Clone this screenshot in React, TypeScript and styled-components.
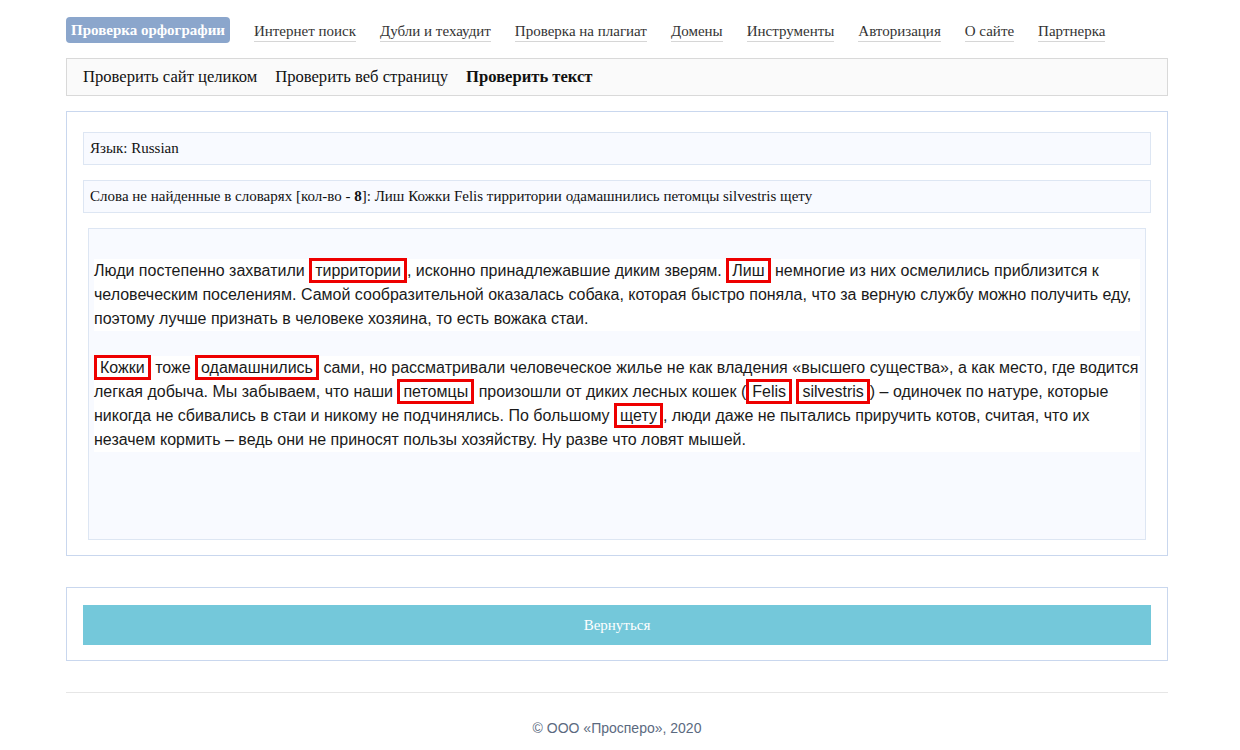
import React from 'react';
import styled, { createGlobalStyle } from 'styled-components';

const GlobalStyle = createGlobalStyle`
  html, body {
    margin: 0;
    padding: 0;
    background: #ffffff;
  }
  body {
    font-family: "Liberation Serif", "Times New Roman", serif;
    color: #222;
  }
`;

const Page = styled.div`
  width: 1102px;
  margin: 0 0 0 66px;
  padding-top: 17px;
`;

const TopNav = styled.nav`
  display: flex;
  align-items: center;
  gap: 24px;
  height: 26px;
`;

const NavPill = styled.a`
  display: block;
  background: #8ba6cc;
  color: #fff;
  font-weight: bold;
  font-size: 15px;
  line-height: 26px;
  padding: 0 5px;
  border-radius: 4px;
  text-decoration: none;
`;

const NavLink = styled.a`
  display: block;
  color: #333;
  font-size: 15px;
  line-height: 20px;
  padding-top: 2px;
  border-bottom: 1px solid #d6d6d6;
  text-decoration: none;
`;

const SubNav = styled.div`
  margin-top: 15px;
  display: flex;
  align-items: center;
  gap: 18px;
  height: 36px;
  padding: 0 16px;
  border: 1px solid #d9d9d9;
  background: #fafafa;
`;

const SubItem = styled.span<{ $active?: boolean }>`
  font-size: 16.6px;
  color: #111;
  font-weight: ${({ $active }) => ($active ? 'bold' : 'normal')};
`;

const Panel = styled.section`
  margin-top: 15px;
  border: 1px solid #c9d7ee;
  padding: 20px 16px 15px;
`;

const InfoBox = styled.div`
  border: 1px solid #dde6f3;
  background: #f8faff;
  font-size: 15px;
  line-height: 31px;
  padding: 0 6px;
  color: #111;
  & + & {
    margin-top: 15px;
  }
`;

const TextArea = styled.div`
  margin: 15px 5px 0;
  height: 280px;
  padding: 30px 5px 0;
  border: 1px solid #dde6f3;
  background: #f8faff;
`;

const Paragraph = styled.p`
  margin: 0 0 25px;
  background: #fff;
  font-family: "Liberation Sans", Arial, sans-serif;
  font-size: 16px;
  line-height: 24px;
  color: #1a1a1a;
`;

const Bad = styled.span`
  border: 3px solid #ee0000;
  padding: 1px 3px;
`;

const ButtonPanel = styled.section`
  margin-top: 31px;
  border: 1px solid #c9d7ee;
  padding: 17px 16px 15px;
`;

const BackButton = styled.button`
  display: block;
  width: 100%;
  height: 40px;
  border: none;
  background: #74c8da;
  color: #fff;
  font-family: "Liberation Serif", "Times New Roman", serif;
  font-size: 15px;
  cursor: pointer;
`;

const Footer = styled.footer`
  margin-top: 31px;
  border-top: 1px solid #e6e6e6;
  padding-top: 27px;
  text-align: center;
  font-family: "Liberation Sans", Arial, sans-serif;
  font-size: 14px;
  color: #5b6a80;
`;

const navItems = [
  'Интернет поиск',
  'Дубли и техаудит',
  'Проверка на плагиат',
  'Домены',
  'Инструменты',
  'Авторизация',
  'О сайте',
  'Партнерка',
];

const App: React.FC = () => {
  return (
    <Page>
      <GlobalStyle />
      <TopNav>
        <NavPill href="#">Проверка орфографии</NavPill>
        {navItems.map((item) => (
          <NavLink key={item} href="#">
            {item}
          </NavLink>
        ))}
      </TopNav>

      <SubNav>
        <SubItem>Проверить сайт целиком</SubItem>
        <SubItem>Проверить веб страницу</SubItem>
        <SubItem $active>Проверить текст</SubItem>
      </SubNav>

      <Panel>
        <InfoBox>Язык: Russian</InfoBox>
        <InfoBox>
          Слова не найденные в словарях [кол-во - <b>8</b>]: Лиш Кожки Felis тирритории одамашнились петомцы
          silvestris щету
        </InfoBox>
        <TextArea>
          <Paragraph>
            Люди постепенно захватили <Bad>тирритории</Bad>, исконно принадлежавшие диким зверям. <Bad>Лиш</Bad>{' '}
            немногие из них осмелились приблизится к человеческим поселениям. Самой сообразительной оказалась собака,
            которая быстро поняла, что за верную службу можно получить еду, поэтому лучше признать в человеке хозяина,
            то есть вожака стаи.
          </Paragraph>
          <Paragraph>
            <Bad>Кожки</Bad> тоже <Bad>одамашнились</Bad> сами, но рассматривали человеческое жилье не как владения
            «высшего существа», а как место, где водится легкая добыча. Мы забываем, что наши <Bad>петомцы</Bad>{' '}
            произошли от диких лесных кошек (<Bad>Felis</Bad> <Bad>silvestris</Bad>) – одиночек по натуре, которые
            никогда не сбивались в стаи и никому не подчинялись. По большому <Bad>щету</Bad>, люди даже не пытались
            приручить котов, считая, что их незачем кормить – ведь они не приносят пользы хозяйству. Ну разве что ловят
            мышей.
          </Paragraph>
        </TextArea>
      </Panel>

      <ButtonPanel>
        <BackButton>Вернуться</BackButton>
      </ButtonPanel>

      <Footer>© ООО «Просперо», 2020</Footer>
    </Page>
  );
};

export default App;
